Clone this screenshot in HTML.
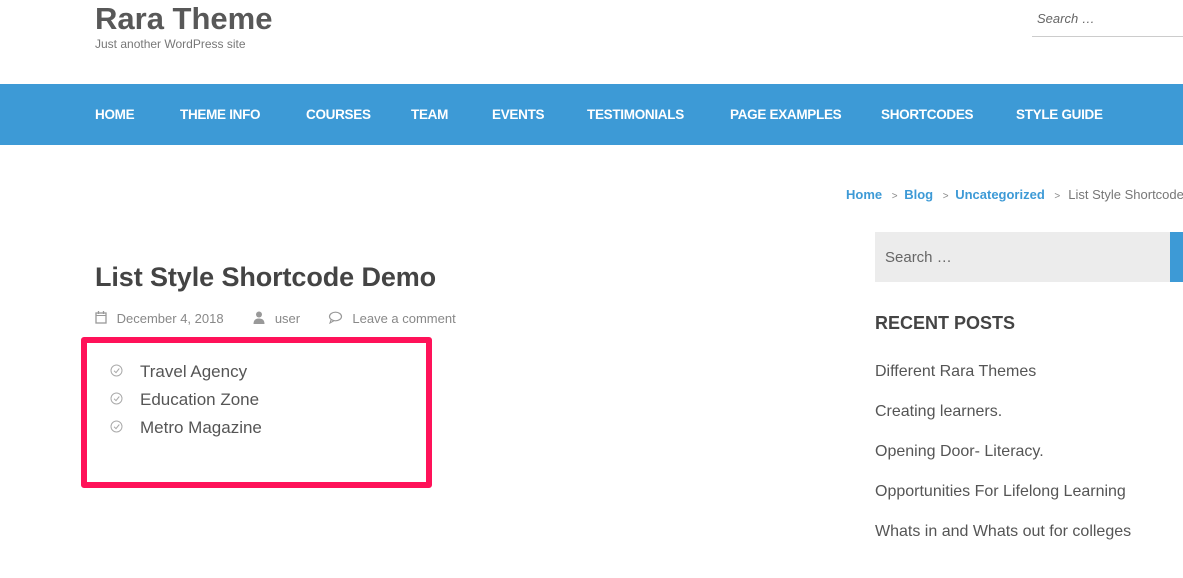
<!DOCTYPE html>
<html><head><meta charset="utf-8"><style>
*{margin:0;padding:0;box-sizing:border-box}
body{width:1183px;height:578px;overflow:hidden;background:#fff;font-family:"Liberation Sans",sans-serif;color:#555;position:relative}
.a{position:absolute;white-space:nowrap}
.nav{position:absolute;left:0;top:84px;width:1183px;height:61px;background:#3d9ad6}
.nav span{position:absolute;top:23px;color:#fff;font-weight:bold;font-size:13.5px;letter-spacing:-0.3px}
.bc{font-size:13px;top:186px}
.bl{color:#3d9ad6;font-weight:bold}
.rp{left:875px;font-size:16px;color:#555}
</style></head><body>
<div class="a" style="left:95px;top:1px;font-size:31px;font-weight:bold;color:#585858">Rara Theme</div>
<div class="a" style="left:95px;top:37px;font-size:12px;color:#777">Just another WordPress site</div>
<div class="a" style="left:1032px;top:11px;font-size:13px;font-style:italic;color:#666;padding-left:5px">Search …</div>
<div class="a" style="left:1032px;top:36px;width:151px;height:1px;background:#ccc"></div>
<div class="nav">
<span style="left:95px">HOME</span><span style="left:180px">THEME INFO</span><span style="left:306px">COURSES</span><span style="left:411px">TEAM</span><span style="left:492px">EVENTS</span><span style="left:587px">TESTIMONIALS</span><span style="left:730px">PAGE EXAMPLES</span><span style="left:881px">SHORTCODES</span><span style="left:1016px">STYLE GUIDE</span>
</div>
<div class="a bc" style="left:846px;top:187px"><span class="bl">Home</span> <span style="font-size:10px;color:#888;margin:0 3px 0 6px">&gt;</span> <span class="bl">Blog</span> <span style="font-size:10px;color:#888;margin:0 3px 0 6px">&gt;</span> <span class="bl">Uncategorized</span> <span style="font-size:10px;color:#888;margin:0 8px 0 6px">&gt;</span><span style="color:#777">List Style Shortcode Demo</span></div>
<div class="a" style="left:875px;top:232px;width:295px;height:50px;background:#ececec"></div>
<div class="a" style="left:1170px;top:232px;width:13px;height:50px;background:#3d9ad6"></div>
<div class="a" style="left:885px;top:249px;font-size:15px;color:#666">Search …</div>
<div class="a" style="left:875px;top:313px;font-size:18px;font-weight:bold;color:#444">RECENT POSTS</div>
<div class="a rp" style="top:363px">Different Rara Themes</div>
<div class="a rp" style="top:403px">Creating learners.</div>
<div class="a rp" style="top:443px">Opening Door- Literacy.</div>
<div class="a rp" style="top:483px">Opportunities For Lifelong Learning</div>
<div class="a rp" style="top:523px">Whats in and Whats out for colleges</div>
<div class="a" style="left:95px;top:262px;font-size:27px;font-weight:bold;color:#444;letter-spacing:-0.1px">List Style Shortcode Demo</div>
<div class="a" style="left:95px;top:311px;font-size:13px;color:#888">
<svg width="12" height="13" style="vertical-align:-1px"><rect x="1" y="2" width="10" height="10" fill="none" stroke="#999" stroke-width="1.3"/><line x1="1" y1="4.5" x2="11" y2="4.5" stroke="#999"/><line x1="3.5" y1="0" x2="3.5" y2="3" stroke="#999" stroke-width="1.3"/><line x1="8.5" y1="0" x2="8.5" y2="3" stroke="#999" stroke-width="1.3"/></svg>
<span style="margin-left:6px">December 4, 2018</span>
<svg width="12" height="13" style="vertical-align:-1px;margin-left:26px"><circle cx="6" cy="3.5" r="3" fill="#999"/><path d="M0.5 13 Q0.5 7.5 6 7.5 Q11.5 7.5 11.5 13Z" fill="#999"/></svg>
<span style="margin-left:6px">user</span>
<svg width="15" height="13" style="vertical-align:-1px;margin-left:24px"><ellipse cx="7.5" cy="5.5" rx="6" ry="4.3" fill="none" stroke="#999" stroke-width="1.2"/><path d="M3 9 L2 12 L6 9.7" fill="none" stroke="#999" stroke-width="1.1"/></svg>
<span style="margin-left:6px">Leave a comment</span></div>
<div class="a" style="left:81px;top:337px;width:351px;height:151px;border:6px solid #ff1259;border-radius:3px"></div>
<div class="a" style="left:110px;top:358px;font-size:17px;color:#555;line-height:28px">
<div><svg width="13" height="13" style="margin-right:17px"><circle cx="6.5" cy="6.5" r="5.5" fill="none" stroke="#aaa"/><path d="M4 6.8 L6 8.6 L9.3 4.5" fill="none" stroke="#aaa"/></svg>Travel Agency</div>
<div><svg width="13" height="13" style="margin-right:17px"><circle cx="6.5" cy="6.5" r="5.5" fill="none" stroke="#aaa"/><path d="M4 6.8 L6 8.6 L9.3 4.5" fill="none" stroke="#aaa"/></svg>Education Zone</div>
<div><svg width="13" height="13" style="margin-right:17px"><circle cx="6.5" cy="6.5" r="5.5" fill="none" stroke="#aaa"/><path d="M4 6.8 L6 8.6 L9.3 4.5" fill="none" stroke="#aaa"/></svg>Metro Magazine</div>
</div>
</body></html>
